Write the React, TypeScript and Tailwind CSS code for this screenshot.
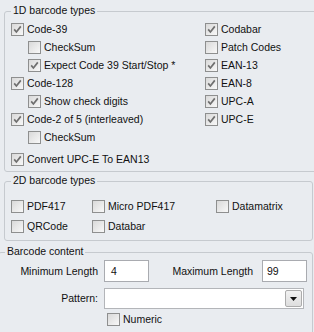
import React from "react";

function Box({ on }: { on?: boolean }) {
  return (
    <span className="flex h-[13px] w-[13px] shrink-0 items-center justify-center border border-[#8e8f8f] bg-gradient-to-br from-[#d9d9d9] to-[#f8f8f8]">
      {on && (
        <svg width="11" height="11" viewBox="0 0 11 11">
          <path d="M2.2 5.4 L4.4 8 L8.8 2.4" fill="none" stroke="#6f6f6f" strokeWidth="1.7" />
        </svg>
      )}
    </span>
  );
}

function Check({ label, on, className = "" }: { label: string; on?: boolean; className?: string }) {
  return (
    <div className={`flex items-center gap-[3px] whitespace-nowrap ${className}`}>
      <Box on={on} />
      <span>{label}</span>
    </div>
  );
}

function Legend({ children }: { children: React.ReactNode }) {
  return <div className="ml-[6px] -mt-[8px] w-fit bg-[#e9ecf0] px-[2px] leading-[13px]">{children}</div>;
}

export default function App() {
  return (
    <div className="h-[332px] w-[314px] overflow-hidden bg-[#e9ecf0] pt-[11px] font-['Liberation_Sans',Arial,sans-serif] text-[10.5px] leading-[13px] text-[#111]">
      {/* 1D barcode types */}
      <div className="ml-[4px] w-[330px] rounded-[3px] border border-[#c6cacf] pb-[3px]">
        <Legend>1D barcode types</Legend>
        <div className="mt-[3px] grid grid-cols-[194px_1fr] pl-[6px]">
          <div className="flex flex-col">
            <Check className="h-[18px]" label="Code-39" on />
            <Check className="h-[18px] pl-[17px]" label="CheckSum" />
            <Check className="h-[18px] pl-[17px]" label="Expect Code 39 Start/Stop *" on />
            <Check className="h-[18px]" label="Code-128" on />
            <Check className="h-[18px] pl-[17px]" label="Show check digits" on />
            <Check className="h-[18px]" label="Code-2 of 5 (interleaved)" on />
            <Check className="h-[18px] pl-[17px]" label="CheckSum" />
            <Check className="mt-[4px] h-[18px]" label="Convert UPC-E To EAN13" on />
          </div>
          <div className="flex flex-col">
            <Check className="h-[18px]" label="Codabar" on />
            <Check className="h-[18px]" label="Patch Codes" />
            <Check className="h-[18px]" label="EAN-13" on />
            <Check className="h-[18px]" label="EAN-8" on />
            <Check className="h-[18px]" label="UPC-A" on />
            <Check className="h-[18px]" label="UPC-E" on />
          </div>
        </div>
      </div>

      {/* 2D barcode types */}
      <div className="ml-[4px] mt-[9px] w-[309px] rounded-[3px] border border-[#c6cacf] pb-[4px]">
        <Legend>2D barcode types</Legend>
        <div className="mt-[9px] grid grid-cols-[81px_124px_1fr] pl-[6px]">
          <Check className="h-[20px]" label="PDF417" />
          <Check className="h-[20px]" label="Micro PDF417" />
          <Check className="h-[20px]" label="Datamatrix" />
          <Check className="h-[20px]" label="QRCode" />
          <Check className="h-[20px]" label="Databar" />
        </div>
      </div>

      {/* Barcode content */}
      <div className="-ml-[2px] mt-[11px] h-[100px] w-[315px] rounded-[3px] border border-[#c6cacf]">
        <Legend>Barcode content</Legend>
        <div className="mt-[2px] flex h-[22px] items-center">
          <span className="w-[99px] text-right">Minimum Length</span>
          <div className="ml-[6px] flex h-[22px] w-[45px] items-center border border-[#a9abb0] bg-white pl-[6px]">4</div>
          <span className="w-[104px] text-right">Maximum Length</span>
          <div className="ml-[9px] flex h-[22px] w-[45px] items-center border border-[#a9abb0] bg-white pl-[4px]">99</div>
        </div>
        <div className="mt-[6px] flex h-[21px] items-center">
          <span className="w-[99px] text-right">Pattern:</span>
          <div className="ml-[6px] flex h-[21px] w-[200px] items-center justify-end border border-[#b3b5b9] bg-white pr-[1px]">
            <div className="flex h-[17px] w-[17px] items-center justify-center rounded-[2px] border border-[#acacac] bg-gradient-to-b from-[#f2f2f2] to-[#dedede]">
              <svg width="7" height="4" viewBox="0 0 7 4">
                <path d="M0 0 H7 L3.5 4 Z" fill="#111" />
              </svg>
            </div>
          </div>
        </div>
        <Check className="ml-[108px] mt-[4px] h-[13px]" label="Numeric" />
      </div>
    </div>
  );
}
